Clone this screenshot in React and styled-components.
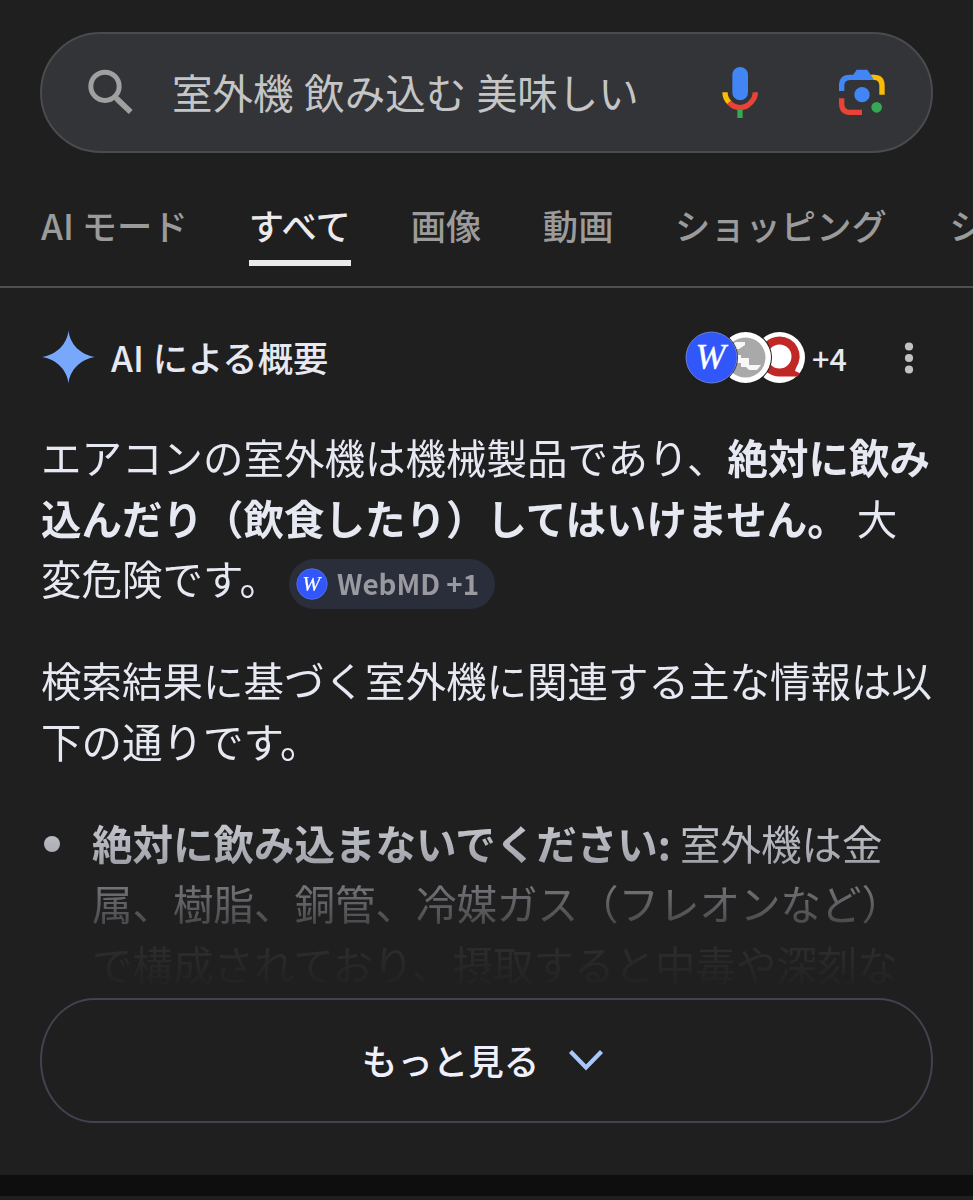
import React from "react";
import styled, { createGlobalStyle } from "styled-components";

const GlobalStyle = createGlobalStyle`
  * { box-sizing: border-box; }
  html, body { margin: 0; background: #1f1f1f; }
  body {
    overflow: hidden;
    font-family: "Noto Sans CJK JP", "Noto Sans", sans-serif;
    color: #e6e8f2;
  }
`;

const Page = styled.div`
  width: 973px;
  height: 1200px;
  overflow: hidden;
  background: #1f1f1f;
  display: flex;
  flex-direction: column;
`;

const SearchBar = styled.div`
  flex: none;
  margin: 32px 40px 0 40px;
  height: 121px;
  padding: 0 43px 2px 44px;
  display: flex;
  align-items: center;
  background: #333438;
  border: 2px solid #4a4b4d;
  border-radius: 61px;
`;

const Query = styled.span`
  flex: 1;
  margin-left: 38px;
  font-size: 40.5px;
  line-height: 60px;
  word-spacing: 1.6px;
  color: #c4c5c6;
  white-space: nowrap;
`;

const Glyph = styled.svg`
  display: block;
  flex: none;
  margin-left: ${(p) => p.$gap || 0}px;
`;

const Tabs = styled.nav`
  flex: none;
  height: 135px;
  padding: 46px 0 0 41px;
  display: flex;
  align-items: flex-start;
  overflow: hidden;
  border-bottom: 2px solid #4f4f51;
`;

const Tab = styled.span`
  flex: none;
  height: 67px;
  margin-right: ${(p) => p.$gap}px;
  font-size: 35.3px;
  line-height: 52px;
  font-weight: 500;
  white-space: nowrap;
  color: ${(p) => (p.$active ? "#ebe9ea" : "#9b9b9b")};
  border-bottom: 6px solid ${(p) => (p.$active ? "#ebe9ea" : "transparent")};
`;

const Header = styled.div`
  flex: none;
  margin-top: 42px;
  height: 54px;
  padding: 0 55px 0 41px;
  display: flex;
  align-items: center;
`;

const Title = styled.h1`
  flex: 1;
  margin: 0 0 0 15px;
  font-size: 35.3px;
  line-height: 54px;
  font-weight: 500;
  word-spacing: 1px;
`;

const Sources = styled.div`
  display: flex;
  align-items: center;
  height: 53px;
`;

const Badge = styled.span`
  position: relative;
  z-index: ${(p) => p.$order};
  width: 53px;
  height: 53px;
  margin-left: ${(p) => (p.$first ? 0 : -19)}px;
`;

const More = styled.span`
  margin: 1px 48px 0 6px;
  width: 40px;
  font-size: 30.5px;
  line-height: 50px;
  font-weight: 500;
`;

const Answer = styled.div`
  flex: none;
  height: 614px;
  padding: 43px 38px 0 41px;
  overflow: hidden;
  font-size: 40.5px;
  line-height: 60.7px;
  mask-image: linear-gradient(
    to bottom,
    #000 0, #000 405px, rgba(0, 0, 0, 0.83) 440px, rgba(0, 0, 0, 0.68) 475px,
    rgba(0, 0, 0, 0.42) 503px, rgba(0, 0, 0, 0.2) 542px,
    rgba(0, 0, 0, 0.07) 562px, rgba(0, 0, 0, 0.03) 590px, transparent 608px
  );
`;

const Paragraph = styled.p`
  margin: 0 0 41px;
`;

const Strong = styled.strong`
  font-weight: 700;
`;

const Chip = styled.span`
  display: inline-flex;
  align-items: center;
  vertical-align: top;
  height: 50px;
  width: 206px;
  margin: 11px 0 -1px 9px;
  padding-left: 7px;
  border-radius: 25px;
  background: #2a2d3a;
  color: #99999f;
  font-size: 27.8px;
  line-height: 50px;
  font-weight: 700;
  white-space: nowrap;
`;

const ChipLabel = styled.span`
  margin: -2px 0 0 9px;
`;

const List = styled.ul`
  margin: 0;
  padding: 0 18px 0 0;
  list-style: none;
`;

const Item = styled.li`
  display: flex;
`;

const Dot = styled.span`
  flex: none;
  width: 16px;
  height: 16px;
  margin: 23px 32px 0 3px;
  border-radius: 50%;
  background: #e6e8f2;
`;

const ShowMore = styled.button`
  flex: none;
  margin: 0 40px;
  width: 893px;
  height: 125px;
  padding: 0 6px 1px 0;
  display: flex;
  align-items: center;
  justify-content: center;
  background: transparent;
  border: 2px solid #41434f;
  border-radius: 54px / 62px;
  font-family: inherit;
  font-size: 35.5px;
  line-height: 52px;
  font-weight: 500;
  color: #f0f0fc;
`;

const Separator = styled.div`
  flex: none;
  margin-top: 52px;
  height: 21px;
  background: #0e0e0e;
`;

const SearchIcon = () => (
  <Glyph width="48" height="48" viewBox="168 143 144 144" fill="none" stroke="#a0a0a0">
    <circle cx="225" cy="198" r="42.5" strokeWidth="15" />
    <path d="M254 228L262 236" strokeWidth="15" />
    <path d="M260 235L302 275" strokeWidth="17" />
  </Glyph>
);

const MicIcon = () => (
  <Glyph width="40" height="56" viewBox="90 131 120 168" fill="none" strokeWidth="16">
    <rect x="127" y="140" width="47" height="100" rx="23.5" fill="#4285f4" />
    <path d="M105 216C105 230 110 239 118 247" stroke="#fbbc04" />
    <path d="M117 246C135 267 165 267 183 246C192 237 196 228 196 216" stroke="#ea4335" />
    <path d="M150 269V293" stroke="#34a853" />
  </Glyph>
);

const LensIcon = () => (
  <Glyph $gap={76} width="52" height="52" viewBox="438 138 156 156">
    <path d="M547 172H552Q576 172 576 197V224" fill="none" stroke="#fbbc04" strokeWidth="16" />
    <path d="M540 164H552V180Z" fill="#fbbc04" />
    <path
      d="M447 213V192Q449 164 480 164H490L500 149H532L552 180H480Q463 181 463 197V213Z"
      fill="#4285f4"
    />
    <path d="M455 235V252Q456 277 480 277H516" fill="none" stroke="#ea4335" strokeWidth="16" />
    <circle cx="516" cy="224" r="23" fill="#4285f4" />
    <circle cx="560" cy="262" r="16" fill="#34a853" />
  </Glyph>
);

const Sparkle = () => (
  <Glyph width="55" height="54" viewBox="0 0 55 54">
    <path
      d="M27.5 0.5C29 14 39 24.5 54 27C39 29.5 29 40 27.5 53.5C26 40 16 29.5 1 27C16 24.5 26 14 27.5 0.5Z"
      fill="#78a8fc"
    />
  </Glyph>
);

const Letter = styled.text`
  font-family: "Liberation Serif", serif;
  font-style: italic;
  font-weight: 400;
  font-size: 36px;
  fill: #fff;
  stroke: #fff;
  stroke-width: 0.3px;
  text-anchor: middle;
`;

const WebMdLogo = ({ size }) => (
  <Glyph width={size} height={size} viewBox="0 0 53 53">
    <circle cx="26.5" cy="26.5" r="26.5" fill="#1f1f1f" />
    <circle cx="26.5" cy="26.5" r="25.5" fill="#3157fb" stroke="#7f8fd8" strokeWidth="0.8" />
    <Letter x="25.5" y="38">W</Letter>
  </Glyph>
);

const GlobeLogo = () => (
  <Glyph width="53" height="53" viewBox="0 0 53 53">
    <circle cx="26.5" cy="26.5" r="26.5" fill="#1f1f1f" />
    <circle cx="26.5" cy="26.5" r="25.5" fill="#fff" />
    <circle cx="26.5" cy="26.5" r="20" fill="#a9a9a9" />
    <path d="M17 11H26V14L20 18H14L11 21V14Z" fill="#f7f7f7" />
    <path d="M6 24H22V27H30V34H42L38 39H30L27 36H22V32H14V35H9L6 30Z" fill="#f7f7f7" />
    <path d="M15 24V20H18V24Z" fill="#d5d5d5" />
  </Glyph>
);

const QLogo = () => (
  <Glyph width="53" height="53" viewBox="0 0 53 53">
    <circle cx="26.5" cy="26.5" r="26.5" fill="#1f1f1f" />
    <circle cx="26.5" cy="26.5" r="25.5" fill="#fff" />
    <path
      d="M26.5 5.5A20 20 0 0 1 43 37L42 40L46.5 42L45 45.5H26.5A20 20 0 0 1 26.5 5.5Z"
      fill="#c02826"
    />
    <circle cx="26.5" cy="25.5" r="12" fill="#fff" />
  </Glyph>
);

const Kebab = () => (
  <Glyph width="18" height="38" viewBox="0 0 18 38" fill="#c2c2c5">
    <circle cx="9" cy="8.5" r="4.1" />
    <circle cx="9" cy="20" r="4.1" />
    <circle cx="9" cy="31.5" r="4.1" />
  </Glyph>
);

const Chevron = () => (
  <Glyph $gap={28} width="38" height="24" viewBox="0 0 38 24" fill="none">
    <path d="M3.5 3.5L19 19.5L34.5 3.5" stroke="#a8c7fa" strokeWidth="4.2" />
  </Glyph>
);

const tabs = [
  { label: "AI モード", gap: 61 },
  { label: "すべて", gap: 60 },
  { label: "画像", gap: 61.5 },
  { label: "動画", gap: 61.5 },
  { label: "ショッピング", gap: 62.5 },
  { label: "ショート動画", gap: 0 },
];

export default function App() {
  return (
    <Page>
      <GlobalStyle />
      <SearchBar>
        <SearchIcon />
        <Query>室外機 飲み込む 美味しい</Query>
        <MicIcon />
        <LensIcon />
      </SearchBar>
      <Tabs>
        {tabs.map((t) => (
          <Tab key={t.label} $gap={t.gap} $active={t.label === "すべて"}>
            {t.label}
          </Tab>
        ))}
      </Tabs>
      <Header>
        <Sparkle />
        <Title>AI による概要</Title>
        <Sources>
          <Badge $order={3} $first><WebMdLogo size={53} /></Badge>
          <Badge $order={2}><GlobeLogo /></Badge>
          <Badge $order={1}><QLogo /></Badge>
          <More>+4</More>
        </Sources>
        <Kebab />
      </Header>
      <Answer>
        <Paragraph>
          エアコンの室外機は機械製品であり、
          <Strong>絶対に飲み込んだり（飲食したり）してはいけません。</Strong> 大変危険です。
          <Chip>
            <WebMdLogo size={32} />
            <ChipLabel>WebMD +1</ChipLabel>
          </Chip>
        </Paragraph>
        <Paragraph>検索結果に基づく室外機に関連する主な情報は以下の通りです。</Paragraph>
        <List>
          <Item>
            <Dot />
            <span>
              <Strong>絶対に飲み込まないでください:</Strong>{" "}
              室外機は金属、樹脂、銅管、冷媒ガス（フレオンなど）で構成されており、摂取すると中毒や深刻な
            </span>
          </Item>
        </List>
      </Answer>
      <ShowMore>
        もっと見る
        <Chevron />
      </ShowMore>
      <Separator />
    </Page>
  );
}
